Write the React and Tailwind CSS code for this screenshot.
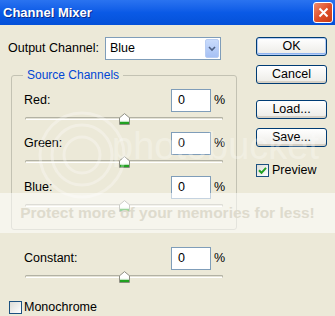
import React from "react";

const font = { fontFamily: '"Liberation Sans", Arial, sans-serif' };

function Thumb() {
  return (
    <svg width="11" height="12" viewBox="0 0 11 12">
      <path d="M0.5 11.5 V4.8 L5.5 0.6 L10.5 4.8 V11.5 Z" fill="#ffffff" stroke="#8f8f84" />
      <rect x="1" y="8.5" width="9" height="2.6" fill="#21a121" />
      <path d="M1 8.3 H10" stroke="#c9e8c9" />
    </svg>
  );
}

function Slider() {
  return (
    <div className="relative ml-[13px] h-[12px] w-[198px]">
      <div className="absolute left-0 right-0 top-[4px] h-[3px] rounded-[2px] border border-[#b3b2a4] border-b-white bg-[#e4e2d5]" />
      <div className="absolute left-[94px] top-0">
        <Thumb />
      </div>
    </div>
  );
}

function Row({ label }) {
  return (
    <div className="flex h-[23px] items-center">
      <div className="w-[159px] pl-[12px] text-[12.5px] text-black">{label}</div>
      <div className="flex h-[23px] w-[40px] items-center border border-[#7f9db9] bg-white pl-[6px] text-[12.5px] text-black">0</div>
      <div className="ml-[3px] text-[12.5px] text-black">%</div>
    </div>
  );
}

function Button({ children, def }) {
  return (
    <div
      className={
        "flex h-[19px] w-[71px] items-center justify-center rounded-[3px] border border-[#003c74] bg-gradient-to-b from-white to-[#ecebe6] text-[12.5px] text-black " +
        (def ? "shadow-[inset_0_0_0_1px_#b5cdf7,inset_0_-1px_0_1px_#8fb4f0]" : "shadow-[inset_0_-2px_0_0_#d6d0c5]")
      }
    >
      {children}
    </div>
  );
}

function Checkbox({ checked }) {
  return (
    <div className="flex h-[13px] w-[13px] items-center justify-center border border-[#1c5180] bg-gradient-to-br from-[#dcdcd7] to-white">
      {checked && (
        <svg width="9" height="9" viewBox="0 0 9 9">
          <path d="M1 4.2 L3.5 6.8 L8 1.8" fill="none" stroke="#21a121" strokeWidth="2" />
        </svg>
      )}
    </div>
  );
}

export default function App() {
  return (
    <div className="relative h-[316px] w-[335px] overflow-hidden bg-[#ece9d8]" style={font}>
      {/* Title bar */}
      <div className="flex h-[25px] items-center justify-between bg-gradient-to-b from-[#2a73f0] via-[#0a5ae6] to-[#0450d8] pl-[3px] pr-[2px]">
        <div className="text-[13px] font-bold text-white [text-shadow:1px_1px_0_#0a2a8a]">Channel Mixer</div>
        <div className="flex h-[21px] w-[20px] items-center justify-center rounded-[3px] border border-white bg-gradient-to-br from-[#f08a6a] via-[#e0502a] to-[#c63a14]">
          <svg width="11" height="11" viewBox="0 0 11 11">
            <path d="M1.5 1.5 L9.5 9.5 M9.5 1.5 L1.5 9.5" stroke="white" strokeWidth="2" />
          </svg>
        </div>
      </div>

      <div className="flex">
        {/* Left column */}
        <div className="w-[248px] pl-[8px] pt-[12px]">
          <div className="flex h-[23px] items-center">
            <div className="w-[97px] text-[12.5px] text-black">Output Channel:</div>
            <div className="flex h-[23px] w-[116px] items-center justify-between border border-[#7f9db9] bg-white pl-[4px] pr-[1px]">
              <span className="text-[12.5px] text-black">Blue</span>
              <div className="flex h-[19px] w-[14px] items-center justify-center rounded-[2px] border border-[#b8cdf3] bg-gradient-to-b from-[#c9dbfc] to-[#a6c1f4]">
                <svg width="8" height="6" viewBox="0 0 8 6">
                  <path d="M1 1 L4 4 L7 1" fill="none" stroke="#4d6185" strokeWidth="1.6" />
                </svg>
              </div>
            </div>
          </div>

          <fieldset className="ml-[3px] mt-[8px] w-[226px] rounded-[3px] border border-[#c3c2b3] pb-[17px]">
            <legend className="ml-[11px] px-[4px] text-[12px] leading-[15px] text-[#0046d5]">Source Channels</legend>
            <div className="pt-[6px]">
              <Row label="Red:" />
              <div className="mt-[1px]">
                <Slider />
              </div>
              <div className="mt-[7px]">
                <Row label="Green:" />
              </div>
              <div className="mt-[1px]">
                <Slider />
              </div>
              <div className="mt-[8px]">
                <Row label="Blue:" />
              </div>
              <div className="mt-[1px]">
                <Slider />
              </div>
            </div>
          </fieldset>

          <div className="ml-[4px] mt-[17px]">
            <Row label="Constant:" />
            <div className="mt-[1px]">
              <Slider />
            </div>
          </div>

          <div className="ml-[1px] mt-[15px] flex items-center">
            <Checkbox />
            <span className="ml-[2px] text-[12.5px] text-black">Monochrome</span>
          </div>
        </div>

        {/* Right column */}
        <div className="pl-[8px] pt-[12px]">
          <Button def>OK</Button>
          <div className="mt-[9px]">
            <Button>Cancel</Button>
          </div>
          <div className="mt-[16px]">
            <Button>Load...</Button>
          </div>
          <div className="mt-[9px]">
            <Button>Save...</Button>
          </div>
          <div className="mt-[14px] flex items-center">
            <Checkbox checked />
            <span className="ml-[3px] text-[12.5px] text-black">Preview</span>
          </div>
        </div>
      </div>

      {/* photobucket watermark */}
      <svg className="pointer-events-none absolute left-[30px] top-[100px]" width="110" height="100" viewBox="0 0 110 100">
        <g fill="none" stroke="white" strokeOpacity="0.3" strokeWidth="3">
          <circle cx="52" cy="55" r="42" />
          <circle cx="52" cy="55" r="30" />
          <circle cx="52" cy="55" r="18" />
        </g>
      </svg>
      <div className="pointer-events-none absolute left-[112px] top-[124px] text-[38px] leading-[44px] text-white/30">photobucket</div>
      <div className="pointer-events-none absolute left-0 top-[193px] flex h-[40px] w-[335px] items-center justify-center bg-white/55">
        <span className="text-[15.5px] font-bold text-[#dedbcd]">Protect more of your memories for less!</span>
      </div>
    </div>
  );
}
